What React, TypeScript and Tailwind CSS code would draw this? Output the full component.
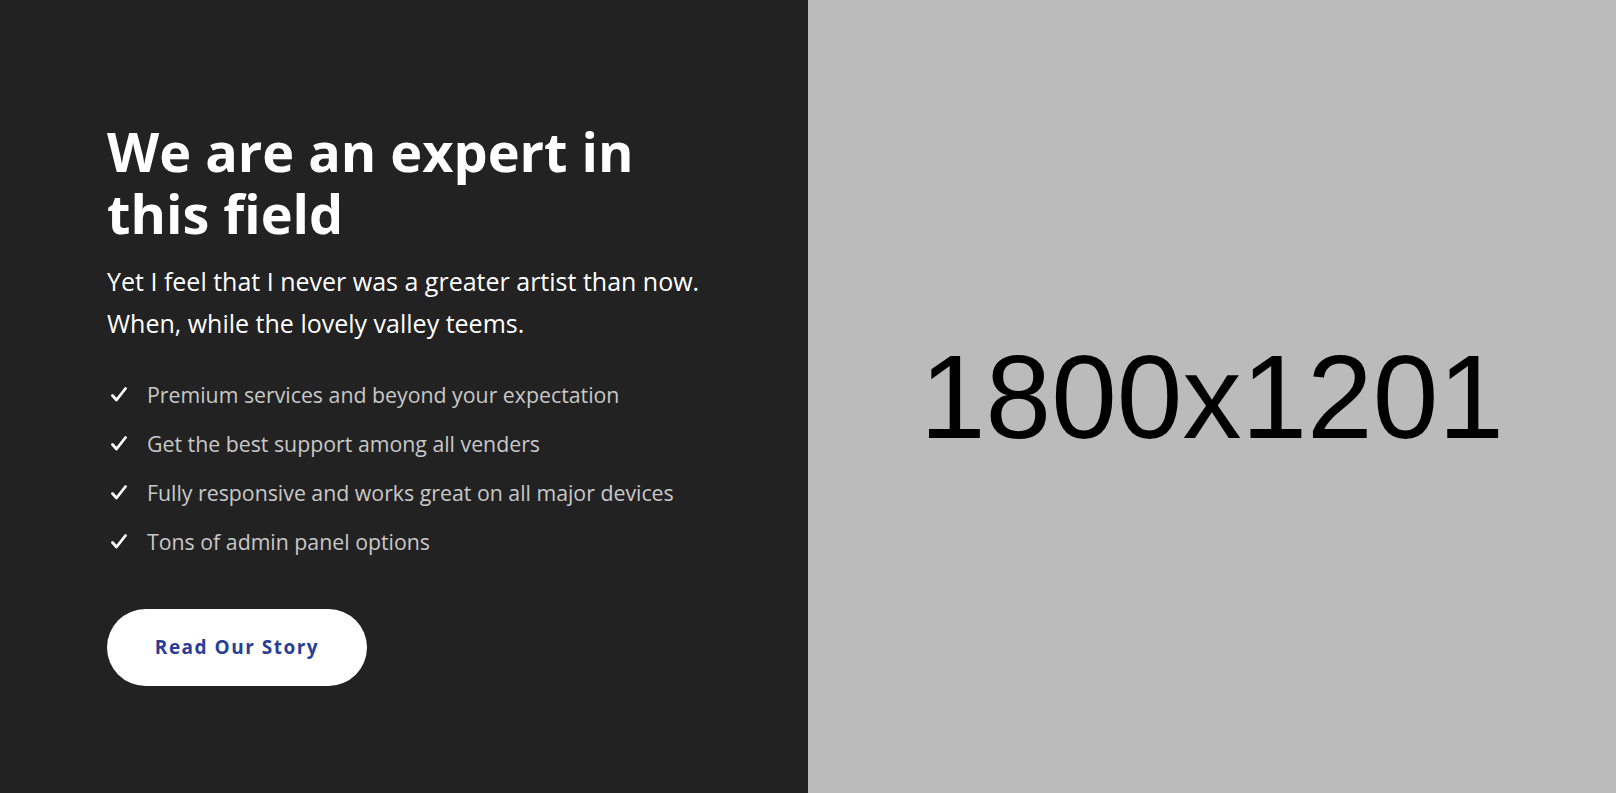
const features = [
  "Premium services and beyond your expectation",
  "Get the best support among all venders",
  "Fully responsive and works great on all major devices",
  "Tons of admin panel options",
]

function CheckMark() {
  return (
    <svg width="16" height="15" viewBox="0 0 16 15" fill="none" className="ml-[4px] shrink-0">
      <path d="M1.5 8.5 L5.5 13 L14.5 1.5" stroke="white" strokeWidth="2.8" strokeLinecap="round" strokeLinejoin="round" />
    </svg>
  )
}

export default function App() {
  return (
    <div className="flex h-[793px] w-full font-['Open_Sans',sans-serif]">
      {/* Left: text */}
      <div className="flex w-1/2 flex-col bg-[#222222] pl-[107px] pr-[40px] pt-[120px]">
        <h2 className="text-[54px] font-bold leading-[62px] text-white">
          We are an expert in
          <br />
          this field
        </h2>
        <p className="mt-[16px] text-[25px] leading-[42px] text-white">
          Yet I feel that I never was a greater artist than now.
          <br />
          When, while the lovely valley teems.
        </p>
        <ul className="mt-[26px] flex flex-col">
          {features.map((f) => (
            <li key={f} className="flex h-[49px] items-center gap-[20px] text-[21.3px] text-[#c8c8c8]">
              <CheckMark />
              {f}
            </li>
          ))}
        </ul>
        <button className="mt-[43px] h-[77px] w-[260px] rounded-full bg-white text-[19px] font-bold tracking-[1.5px] text-[#283d98]">
          Read Our Story
        </button>
      </div>

      {/* Right: placeholder image */}
      <div className="flex w-1/2 items-center justify-center bg-[#bbbbbb]">
        <span className="font-['Liberation_Sans',Arial,sans-serif] text-[118px] leading-none text-black">
          1800x1201
        </span>
      </div>
    </div>
  )
}
